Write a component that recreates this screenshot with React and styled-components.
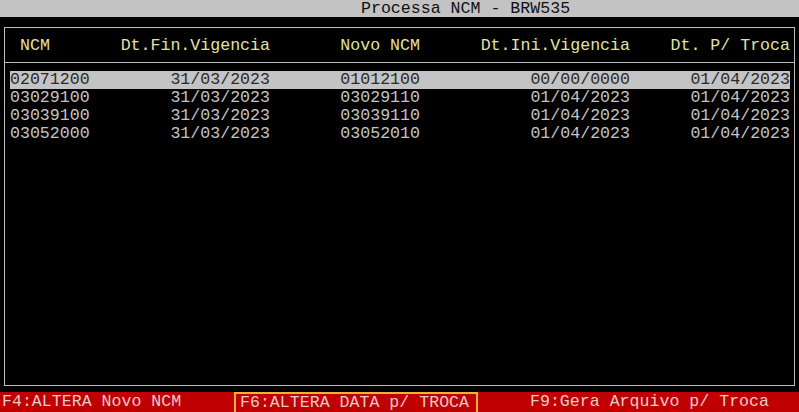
import styled, { createGlobalStyle } from "styled-components"

const rows = [
  ["02071200", "31/03/2023", "01012100", "00/00/0000", "01/04/2023"],
  ["03029100", "31/03/2023", "03029110", "01/04/2023", "01/04/2023"],
  ["03039100", "31/03/2023", "03039110", "01/04/2023", "01/04/2023"],
  ["03052000", "31/03/2023", "03052010", "01/04/2023", "01/04/2023"],
]

export default function App() {
  return (
    <Screen>
      <GlobalStyle />
      <TitleBar>Processa NCM - BRW535</TitleBar>

      <Body>
        <Frame>
          <HeaderRow>
            <Cell $first>NCM</Cell>
            <Cell>Dt.Fin.Vigencia</Cell>
            <Cell>Novo NCM</Cell>
            <Cell>Dt.Ini.Vigencia</Cell>
            <Cell>Dt. P/ Troca</Cell>
          </HeaderRow>
          <List>
            {rows.map((r, i) => (
              <Row key={r[0]} $selected={i === 0}>
                {r.map((v, j) => <Cell key={j} $first={j === 0}>{v}</Cell>)}
              </Row>
            ))}
          </List>
        </Frame>
      </Body>

      <Footer>
        <Key $w="232px" $pad="2px">F4:ALTERA Novo NCM</Key>
        <ActiveKey>F6:ALTERA DATA p/ TROCA</ActiveKey>
        <Key $pad="52px">F9:Gera Arquivo p/ Troca</Key>
      </Footer>
    </Screen>
  )
}

const GlobalStyle = createGlobalStyle`
    html, body {
      margin: 0;
      padding: 0;
      background: #000;
    }
`;

const Screen = styled.div`
    width: 799px;
    height: 412px;
    display: flex;
    flex-direction: column;
    font-family: "Liberation Mono", "Courier New", monospace;
    font-size: 16.6px;
    background: #000;
    overflow: hidden;
`;

const TitleBar = styled.div`
    height: 17px;
    line-height: 17px;
    padding-left: 361px;
    background: #c3c3c3;
    color: #111;
    white-space: pre;
`;

const Body = styled.div`
    flex: 1;
    padding: 10px 4px 6px 4px;
    display: flex;
`;

const Frame = styled.div`
    flex: 1;
    border: 1px solid #bdbdbd;
    display: flex;
    flex-direction: column;
`;

const columns = `100px 160px 150px 210px 160px`;

const HeaderRow = styled.div`
    display: grid;
    grid-template-columns: ${columns};
    height: 34px;
    align-items: center;
    padding: 0 0 0 5px;
    border-bottom: 1px solid #bdbdbd;
    color: #e2e2a6;
    & > div:first-child {
      padding-left: 10px;
    }
`;

const List = styled.div`
    padding: 8px 0 0 5px;
    display: flex;
    flex-direction: column;
`;

const Row = styled.div`
    display: grid;
    grid-template-columns: ${columns};
    width: 780px;
    height: 18px;
    line-height: 18px;
    color: ${(p) => (p.$selected ? "#2a2a2a" : "#c4c4c4")};
    background: ${(p) => (p.$selected ? "#c4c4c4" : "transparent")};
`;

const Cell = styled.div`
    white-space: pre;
    text-align: ${(p) => (p.$first ? "left" : "right")};
`;

const Footer = styled.div`
    height: 20px;
    display: flex;
    align-items: stretch;
    background: #c00000;
    color: #e6cccc;
    line-height: 20px;
`;

const Key = styled.div`
    white-space: pre;
    width: ${(p) => p.$w || "auto"};
    padding-left: ${(p) => p.$pad || "0"};
`;

const ActiveKey = styled.div`
    box-sizing: border-box;
    width: 244px;
    border: 2px solid #f4b232;
    border-bottom: none;
    padding-left: 4px;
    line-height: 18px;
    white-space: pre;
`;
